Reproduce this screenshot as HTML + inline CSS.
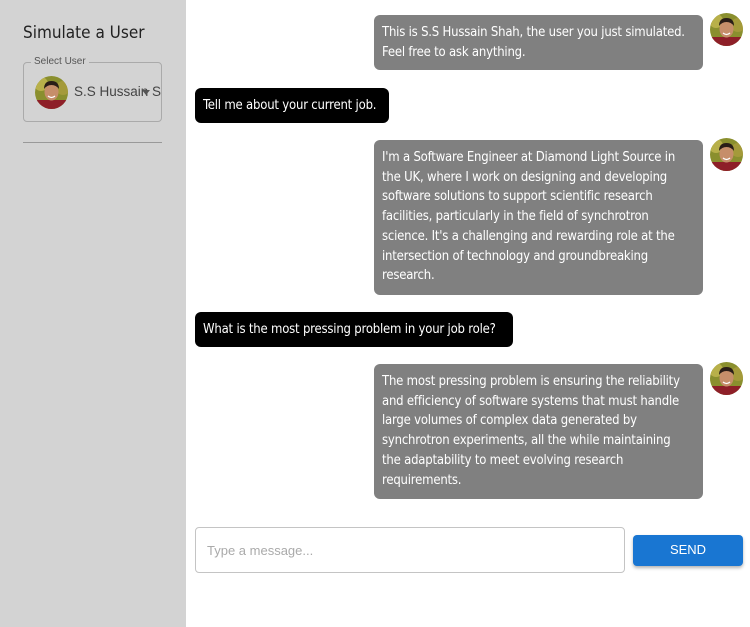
<!DOCTYPE html>
<html><head><meta charset="utf-8"><style>
*{margin:0;padding:0;box-sizing:border-box}
body{width:750px;height:627px;overflow:hidden;background:#fff;font-family:"Liberation Sans",sans-serif;position:relative}
.side{position:absolute;left:0;top:0;width:186px;height:627px;background:#d3d3d3}
.ab{position:absolute}
.bub{position:absolute;background:#808080;color:#fff;border-radius:6px;font-size:13px;line-height:19.7px;padding:8px 8px;white-space:nowrap;font-family:"DejaVu Sans Condensed","Liberation Sans",sans-serif;letter-spacing:-0.2px}
.usr{position:absolute;background:#000;color:#fff;border-radius:6px;font-size:13px;padding:0 8px;height:35px;line-height:35px;white-space:nowrap;font-family:"DejaVu Sans Condensed","Liberation Sans",sans-serif;letter-spacing:-0.2px}
.av{position:absolute;width:33px;height:33px}
</style></head><body>
<svg width="0" height="0" style="position:absolute"><defs>
<clipPath id="c"><circle cx="16.5" cy="16.5" r="16.5"/></clipPath>
<g id="a"><g clip-path="url(#c)">
<rect width="33" height="33" fill="#8a8f2e"/>
<circle cx="6" cy="8" r="7" fill="#b8b04a"/><circle cx="28" cy="12" r="7" fill="#a49a3a"/>
<rect x="0" y="24" width="33" height="10" fill="#8e1f28"/>
<ellipse cx="16.5" cy="16" rx="7" ry="8.5" fill="#c68e6a"/>
<path d="M9 13 Q9 5 16.5 5 Q24 5 24 13 Q21 9 16.5 9 Q12 9 9 13Z" fill="#2a1d17"/>
<path d="M13 20 Q16.5 23 20 20" stroke="#fff" stroke-width="1.2" fill="none"/>
</g></g></defs></svg>
<div class="side">
<div class="ab" style="left:23px;top:23px;font-size:17px;color:#222;font-family:'DejaVu Sans Condensed','Liberation Sans',sans-serif">Simulate a User</div>
<div class="ab" style="left:23px;top:62px;width:139px;height:60px;border:1px solid #aaa;border-radius:4px"></div>
<div class="ab" style="left:31px;top:56px;padding:0 3px;background:#d3d3d3;font-size:10px;color:#555">Select User</div>
<svg class="ab" style="left:35px;top:76px" width="33" height="33"><use href="#a"/></svg>
<div class="ab" style="left:74px;top:84px;width:87px;overflow:hidden;white-space:nowrap;font-size:13.5px;color:#444">S.S Hussain Shah</div>
<div class="ab" style="left:142px;top:90px;width:0;height:0;border-left:4px solid transparent;border-right:4px solid transparent;border-top:5px solid #555"></div>
<div class="ab" style="left:23px;top:142px;width:139px;height:1px;background:#999"></div>
</div>

<div class="bub" style="left:374px;top:15px;width:329px;height:55px">This is S.S Hussain Shah, the user you just simulated.<br>Feel free to ask anything.</div>
<svg class="av" style="left:710px;top:13px"><use href="#a"/></svg>

<div class="usr" style="left:195px;top:88px;width:194px">Tell me about your current job.</div>

<div class="bub" style="left:374px;top:140px;width:329px;height:155px">I'm a Software Engineer at Diamond Light Source in<br>the UK, where I work on designing and developing<br>software solutions to support scientific research<br>facilities, particularly in the field of synchrotron<br>science. It's a challenging and rewarding role at the<br>intersection of technology and groundbreaking<br>research.</div>
<svg class="av" style="left:710px;top:138px"><use href="#a"/></svg>

<div class="usr" style="left:195px;top:312px;width:318px">What is the most pressing problem in your job role?</div>

<div class="bub" style="left:374px;top:364px;width:329px;height:135px">The most pressing problem is ensuring the reliability<br>and efficiency of software systems that must handle<br>large volumes of complex data generated by<br>synchrotron experiments, all the while maintaining<br>the adaptability to meet evolving research<br>requirements.</div>
<svg class="av" style="left:710px;top:362px"><use href="#a"/></svg>

<div class="ab" style="left:195px;top:527px;width:430px;height:46px;border:1px solid #c4c4c4;border-radius:4px;font-size:13px;color:#aaa;padding:15px 0 0 11px">Type a message...</div>
<div class="ab" style="left:633px;top:535px;width:110px;height:31px;background:#1976d2;border-radius:4px;color:#fff;font-size:13px;text-align:center;line-height:29px;box-shadow:0 2px 3px rgba(0,0,0,.3)">SEND</div>
</body></html>
